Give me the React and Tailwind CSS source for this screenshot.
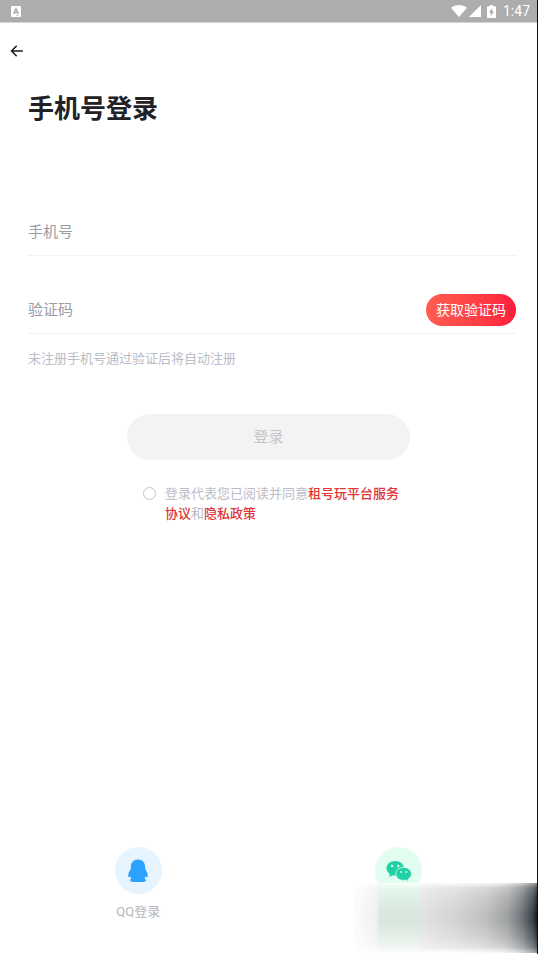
import React, { useState } from 'react';

function StatusBar() {
  return (
    <div className="h-[23px] bg-[#adadad] border-b border-[#d4d4d4] flex items-center justify-between pl-[11px] pr-[7px] text-white">
      <svg className="w-[10px] h-[11px]" viewBox="0 0 10 11" aria-hidden="true">
        <rect width="10" height="11" rx="1" fill="#fff" />
        <path d="M2.600 8 5 2.800 7.400 8M3.500 6.400h3" fill="none" stroke="#adadad" strokeWidth="1.500" />
        <path d="M5 9.600h3" stroke="#adadad" strokeWidth="0.600" />
      </svg>
      <div className="flex items-center">
        <svg className="w-4 h-3" viewBox="0 0 16 12" fill="#fff" aria-hidden="true">
          <path d="M8 12 0 2.800C2.200 1 5 0 8 0s5.800 1 8 2.800z" />
        </svg>
        <svg className="w-3 h-3 ml-[2px]" viewBox="0 0 12 12" fill="#fff" aria-hidden="true">
          <path d="M12 0v12H0z" />
        </svg>
        <svg className="w-[9px] h-[13px] ml-[6px]" viewBox="0 0 9 13" aria-hidden="true">
          <path d="M3 0h3v1.300h2.200q.8 0 .8.800v10.100q0 .8-.8.800H.8q-.8 0-.8-.8V2.100q0-.8.8-.8H3z" fill="#fff" />
          <path d="M5.600 3 2 7.400h2.100L3.400 11 7 6.600H4.900z" fill="#a0a0a0" />
        </svg>
        <span className="ml-[7px] text-sm leading-5">1:47</span>
      </div>
    </div>
  );
}

function QQIcon() {
  return (
    <svg className="w-[20px] h-6" viewBox="0 0 20 24" fill="#2ba2ff" aria-hidden="true">
      <path d="M10 .5C5.400.5 2.800 3.800 2.800 8.300v1.700C1.200 12.300.2 14.800.2 16.600c0 1.900 1 2.200 2.300 1 .2.700.5 1.300 1 1.900-.9.400-1.300 1-1.300 1.700 0 1 .8 1.700 2.800 1.700h10c2 0 2.800-.7 2.800-1.700 0-.7-.4-1.300-1.300-1.700.5-.6.8-1.200 1-1.900 1.300 1.200 2.300.9 2.300-1 0-1.800-1-4.300-2.600-6.600V8.300C17.200 3.800 14.600.5 10 .5z" />
    </svg>
  );
}

function WechatIcon() {
  return (
    <svg className="w-[26px] h-[22px]" viewBox="0 0 26 22" aria-hidden="true">
      <path d="M9.200 1C4.300 1 .5 4.200.5 8.300c0 2.400 1.300 4.400 3.300 5.700L3.200 17l3.300-1.700c.9.200 1.800.3 2.700.3 4.800 0 8.700-3.200 8.700-7.300S14 1 9.200 1z" fill="#1fd1a5" />
      <circle cx="6" cy="6" r="1.200" fill="#e0fdef" />
      <circle cx="12.200" cy="6" r="1.200" fill="#e0fdef" />
      <path d="M17.600 7.400c-4.400 0-7.800 2.800-7.800 6.500s3.400 6.500 7.800 6.500c.8 0 1.500-.1 2.200-.3l3 1.500-.6-2.600c2-1.200 3.300-3 3.300-5.100 0-3.700-3.500-6.500-7.900-6.500z" fill="#1fd1a5" stroke="#e0fdef" strokeWidth="0.800" />
      <circle cx="15" cy="12" r="0.900" fill="#e0fdef" />
      <circle cx="20.300" cy="12" r="0.900" fill="#e0fdef" />
    </svg>
  );
}

export default function App() {
  const [phone, setPhone] = useState('');
  const [code, setCode] = useState('');
  const [agreed, setAgreed] = useState(false);

  return (
    <div className="min-h-screen flex flex-col bg-white border-r border-[#0b1018] font-[Roboto,'Noto_Sans_CJK_SC',sans-serif]">
      <StatusBar />

      {/* Back */}
      <header className="pl-[10px] pt-[21px]">
        <button type="button" aria-label="返回" className="block">
          <svg className="w-[14px] h-[14px]" viewBox="0 0 14 14" fill="none" stroke="#1c1c1e" strokeWidth="1.600" strokeLinecap="round" strokeLinejoin="round" aria-hidden="true">
            <path d="M12.300 7H1.700M6.200 2.300 1.500 7l4.700 4.700" />
          </svg>
        </button>
      </header>

      <main className="pl-7 pr-[21px] pt-[33px]">
        <h1 className="text-[26px] leading-9 font-bold text-[#222226]">手机号登录</h1>

        <form onSubmit={(e) => e.preventDefault()}>
          {/* Phone number */}
          <div className="mt-[81px] h-12 flex items-center border-b border-[#f3f3f5]">
            <input
              type="tel"
              aria-label="手机号"
              placeholder="手机号"
              className="flex-1 min-w-0 text-[15px] leading-6 outline-none text-[#222226] placeholder:text-[#9c9ca8]"
              value={phone}
              onChange={(e) => setPhone(e.target.value)}
            />
          </div>

          {/* Verification code */}
          <div className="mt-[30px] h-12 flex items-center border-b border-[#f0f0f2]">
            <input
              type="text"
              aria-label="验证码"
              placeholder="验证码"
              className="flex-1 min-w-0 text-[15px] leading-6 outline-none text-[#222226] placeholder:text-[#9c9ca8]"
              value={code}
              onChange={(e) => setCode(e.target.value)}
            />
            <button type="button" className="h-8 px-[10px] rounded-full bg-linear-to-r from-[#ff5c50] to-[#ff1a3c] text-white text-sm">
              获取验证码
            </button>
          </div>

          <p className="mt-[15px] text-[13px] leading-5 text-[#bcbcc6]">未注册手机号通过验证后将自动注册</p>

          <div className="flex justify-center pr-[7px]">
            <button type="submit" className="mt-[45px] h-[46px] w-[283px] rounded-full bg-[#f3f3f3] text-[15px] text-[#c3c3c8]">
              登录
            </button>
          </div>

          {/* Agreement */}
          <div className="mt-6 flex justify-center items-start gap-[9px]">
            <input
              id="agree"
              type="checkbox"
              className="appearance-none shrink-0 mt-[3px] w-[13px] h-[13px] rounded-full border border-[#c3c3cc] checked:bg-[#e03636] checked:border-[#e03636]"
              checked={agreed}
              onChange={(e) => setAgreed(e.target.checked)}
            />
            <label htmlFor="agree" className="w-[236px] text-[13px] leading-5 text-[#bcbcc6]">
              登录代表您已阅读并同意
              <a href="#terms" className="font-medium text-[#e03636]">租号玩平台服务协议</a>
              和
              <a href="#privacy" className="font-medium text-[#e03636]">隐私政策</a>
            </label>
          </div>
        </form>
      </main>

      {/* Third party login */}
      <footer className="relative mt-auto px-2 pb-8 flex">
        <button type="button" className="flex-1 flex flex-col items-center">
          <span className="w-[47px] h-[47px] rounded-full bg-[#e5f4ff] flex items-center justify-center">
            <QQIcon />
          </span>
          <span className="mt-2 text-[13px] leading-5 text-[#b4b4be]">QQ登录</span>
        </button>
        <button type="button" aria-label="微信登录" className="flex-1 flex flex-col items-center">
          <span className="w-[47px] h-[47px] rounded-full bg-[#e0fdef] flex items-center justify-center">
            <WechatIcon />
          </span>
        </button>

        {/* Shadow patch in the corner */}
        <div className="absolute right-0 bottom-px w-[183px] h-[70px] overflow-hidden bg-[linear-gradient(to_right,#fbfcfb_0%,#f0f1f0_12%,#e2e3e2_36%,#d3d4d3_55%,#bebfbe_72%,#9fa1a2_84%,#70747a_92%,#383f45_98%,#10161c_100%)]">
          <div className="absolute left-6 top-0 w-[42px] h-full blur-[1px] bg-[linear-gradient(to_bottom,#d9f5e7_0%,#d8e9df_35%,#dae7df_65%,#e6f0ea_100%)]" />
          <div className="absolute inset-0 bg-[linear-gradient(to_bottom,rgba(255,255,255,0.850)_0%,rgba(255,255,255,0.400)_7%,rgba(255,255,255,0.200)_20%,rgba(255,255,255,0)_45%,rgba(255,255,255,0)_55%,rgba(255,255,255,0.250)_78%,rgba(255,255,255,0.500)_92%,rgba(255,255,255,0.950)_100%)] mask-[linear-gradient(to_right,black_80%,rgba(0,0,0,0.600)_100%)]" />
        </div>
      </footer>
    </div>
  );
}
